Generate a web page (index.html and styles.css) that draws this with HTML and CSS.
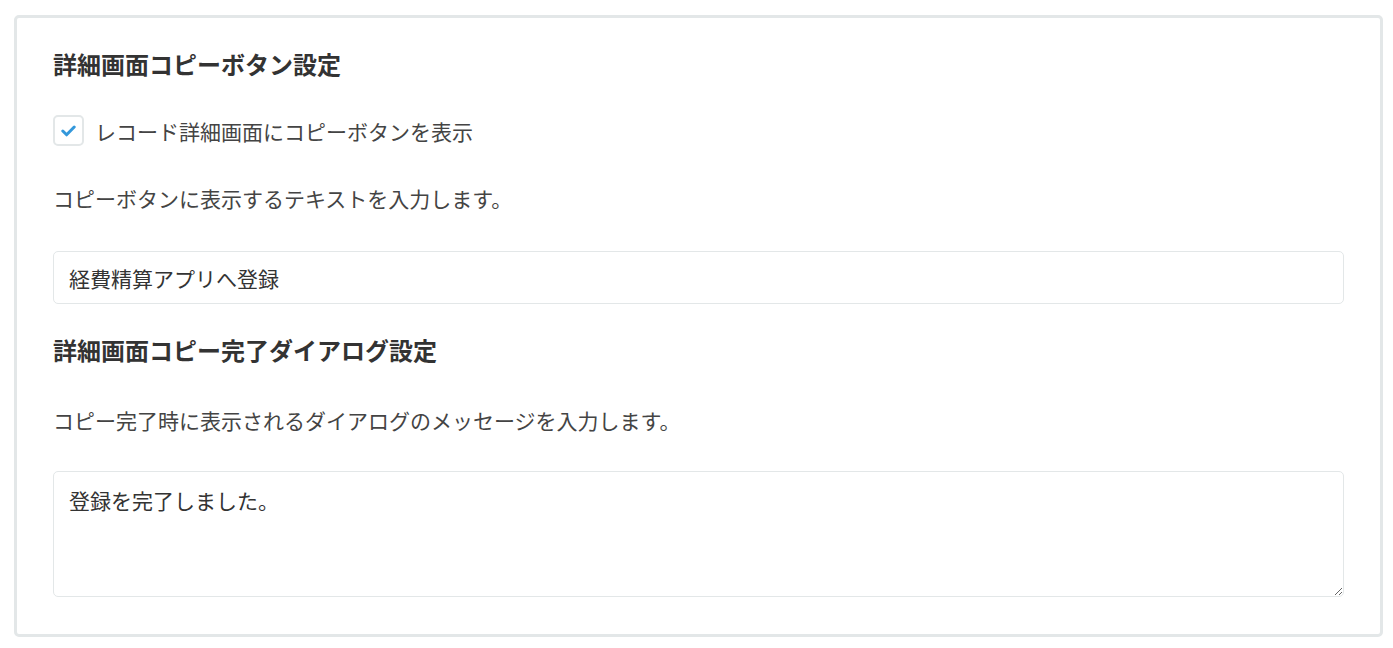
FILE: index.html
```html
<!DOCTYPE html>
<html lang="ja">
<head>
  <meta charset="UTF-8">
  <title>コピーボタン設定</title>
  <link rel="stylesheet" href="styles.css">
</head>
<body>
  <div class="settings">
    <h2 class="settings-title">詳細画面コピーボタン設定</h2>
    <label class="check-row">
      <input type="checkbox" id="showButton" checked>
      <span class="check-box">
        <svg width="15" height="12" viewBox="0 0 15 12">
          <path d="M1.8 6 L5.6 9.8 L13.2 2" fill="none" stroke="#3498db" stroke-width="3" stroke-linecap="round" stroke-linejoin="round"/>
        </svg>
      </span>
      <span class="check-label">レコード詳細画面にコピーボタンを表示</span>
    </label>
    <p class="settings-desc">コピーボタンに表示するテキストを入力します。</p>
    <input type="text" class="text-input" id="buttonText" value="経費精算アプリへ登録">

    <h2 class="settings-title">詳細画面コピー完了ダイアログ設定</h2>
    <p class="settings-desc">コピー完了時に表示されるダイアログのメッセージを入力します。</p>
    <textarea class="text-area" id="dialogText">登録を完了しました。</textarea>
  </div>
</body>
</html>
```

FILE: styles.css
```css
body {
  margin: 0;
  font-family: "Noto Sans CJK JP", "Noto Sans", sans-serif;
  color: #333;
  background: #fff;
}

.settings {
  margin: 15px 10px 13px 14px;
  padding: 28px 36px 37px;
  border: 3px solid #e3e7e8;
  border-radius: 5px;
  display: flex;
  flex-direction: column;
}

.settings-title {
  margin: 0;
  font-size: 24px;
  font-weight: bold;
  line-height: 36px;
}

.check-row {
  display: flex;
  align-items: center;
  gap: 11px;
  margin-top: 33px;
  cursor: pointer;
}

.check-row input {
  display: none;
}

.check-box {
  width: 27px;
  height: 27px;
  border: 2px solid #e3e7e8;
  border-radius: 5px;
  display: flex;
  align-items: center;
  justify-content: center;
}

.check-label {
  font-size: 21px;
  line-height: 30px;
  color: #444;
}

.settings-desc {
  margin: 37px 0 0;
  font-size: 21px;
  line-height: 30px;
  color: #444;
}

.text-input,
.text-area {
  box-sizing: border-box;
  width: 100%;
  margin: 0;
  border: 1px solid #e3e7e8;
  border-radius: 5px;
  font-family: inherit;
  font-size: 21px;
  color: #333;
  padding: 0 15px;
  outline: none;
}

.text-input {
  height: 53px;
  margin-top: 38px;
  margin-bottom: 28px;
}

.text-area {
  height: 126px;
  margin-top: 36px;
  padding-top: 13px;
  line-height: 30px;
  resize: vertical;
}
```
